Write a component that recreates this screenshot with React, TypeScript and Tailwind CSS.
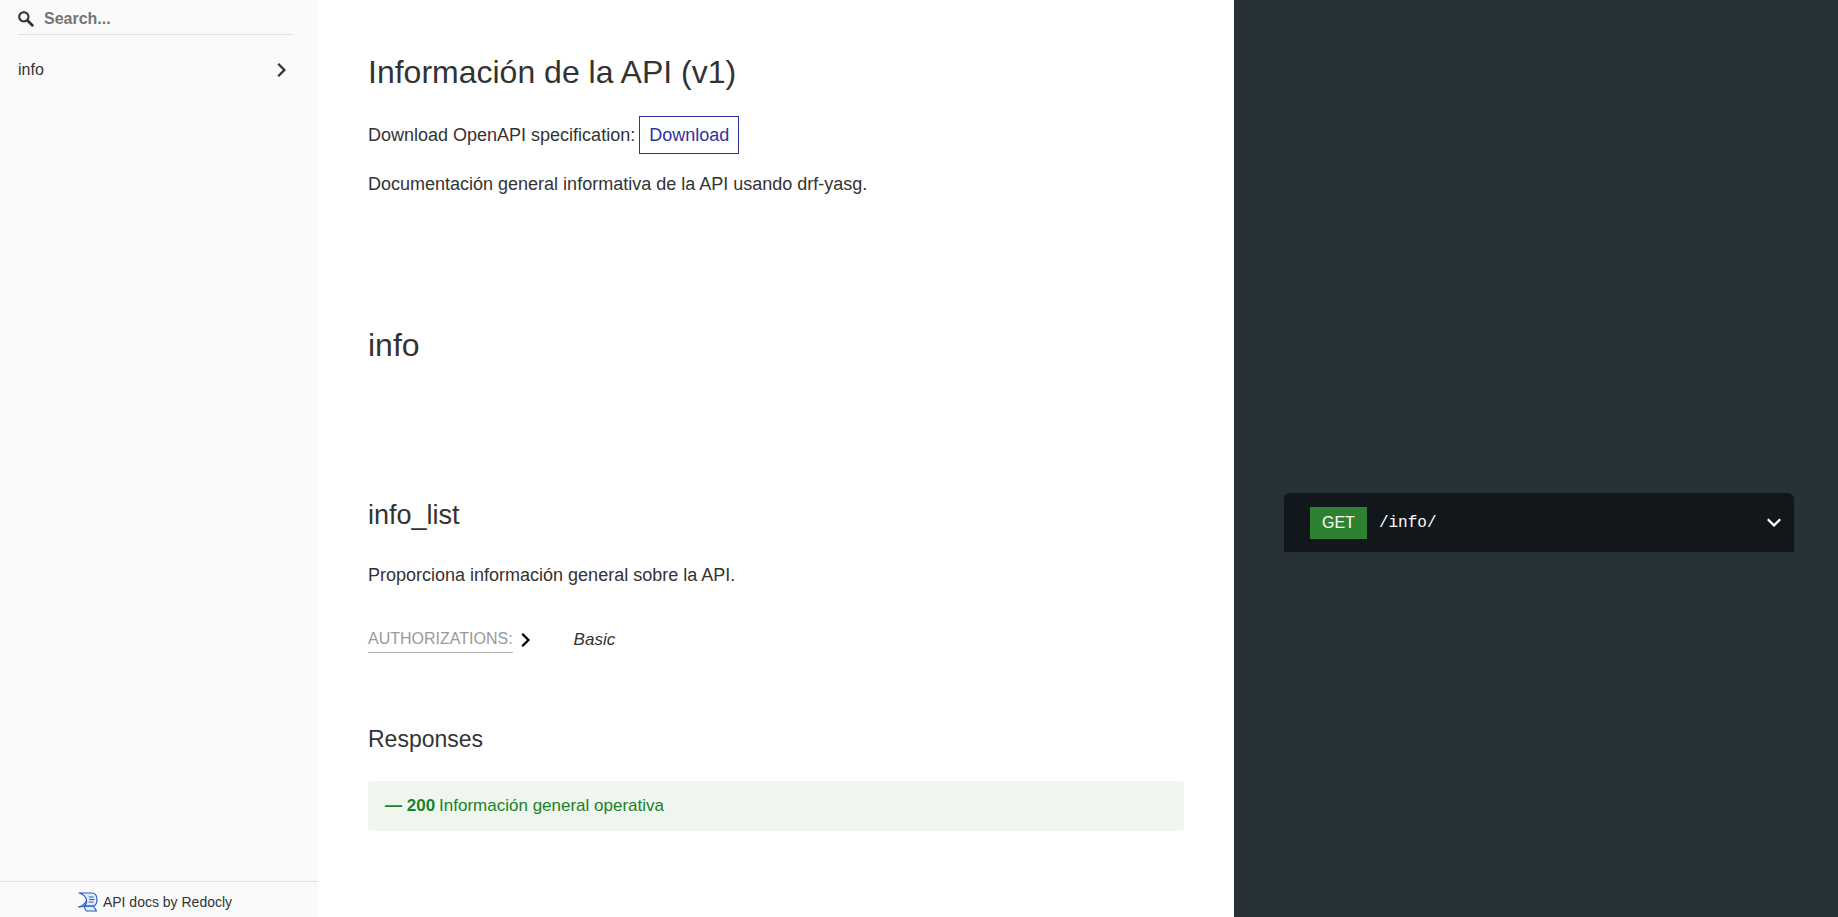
import type { ReactNode } from "react";

type ChevronProps = { className: string };

function Chevron({ className }: ChevronProps) {
  return (
    <svg
      viewBox="0 0 16 16"
      className={className}
      fill="none"
      stroke="currentColor"
      strokeWidth="2.3"
      aria-hidden="true"
    >
      <path d="M4.200 1.800 10.400 8 4.200 14.200" />
    </svg>
  );
}

function SearchIcon() {
  return (
    <svg viewBox="0 0 1000 1000" className="size-4 shrink-0" fill="currentColor" aria-hidden="true">
      <path d="M968.2 849.4 667.3 549c83.9-136.5 66.7-317.4-51.7-435.6C477.1-25 252.5-25 113.9 113.4c-138.5 138.3-138.5 362.6 0 501C219.2 730.1 413.2 743 547.6 666.5l301.9 301.4c43.6 43.6 76.9 14.9 104.2-12.4 27.3-27.3 58.1-62.5 14.5-106.1zM524.5 522c-88.9 88.7-233 88.7-321.8 0-88.9-88.7-88.9-232.6 0-321.3 88.9-88.7 233-88.7 321.8 0 88.9 88.7 88.9 232.6 0 321.3z" />
    </svg>
  );
}

function RedoclyLogo() {
  return (
    <svg
      viewBox="0 0 20 20"
      className="size-5 shrink-0"
      fill="#e3ecfc"
      stroke="#2a5cc4"
      strokeWidth="1.2"
      strokeLinejoin="round"
      strokeLinecap="round"
      aria-hidden="true"
    >
      <path d="M1 1h12.500c3.500 0 5.500 2.800 5.500 6.500s-2 6.200-4 6.700H6.500C8.500 12 9 9.500 8.200 7 7.200 3.800 4.500 2 1 1z" />
      <path d="M1 14.800c3-.8 5.800-2.600 7-5.300" fill="none" />
      <path d="M1 14.800c2.500 0 3.500 0 5.500-.6H15c1 0 2 2.600 3.500 4.800H8.500c-1.500-1-2-2.500-2-4.800" />
      <path d="M11.200 5h4M11.500 7.500h4.500M11.200 10h4" />
    </svg>
  );
}

type RowProps = { children: ReactNode; sample?: ReactNode; last?: boolean };

function Row({ children, sample, last }: RowProps) {
  return (
    <section className={last ? "grid grow grid-cols-[916fr_604fr]" : "grid grid-cols-[916fr_604fr]"}>
      <div className="px-[50px] pb-16">{children}</div>
      <div className="bg-[#263238] pr-11 pl-[50px]">{sample}</div>
    </section>
  );
}

export default function App() {
  return (
    <div className="flex min-h-screen bg-white font-['Liberation_Sans',Arial,sans-serif] text-[#333]">
      <aside className="sticky top-0 flex h-screen w-[318px] shrink-0 flex-col bg-[#fafafa]">
        <label className="mr-[25px] ml-[18px] flex h-[35px] items-center gap-[10px] border-b border-[#e1e1e1] pt-[3px]">
          <SearchIcon />
          <input
            type="text"
            aria-label="Search"
            placeholder="Search..."
            className="w-full bg-transparent text-base font-bold outline-none placeholder:text-[#757575]"
          />
        </label>
        <nav className="mt-[19px] grow">
          <a href="#info" className="flex h-8 items-center justify-between pr-7 pl-[18px] text-base">
            info
            <Chevron className="size-4" />
          </a>
        </nav>
        <a
          href="https://redocly.com/redoc/"
          className="flex h-9 items-center justify-center gap-[5px] border-t border-[#e1e1e1] pt-1 pr-2 text-sm"
        >
          <RedoclyLogo />
          API docs by Redocly
        </a>
      </aside>

      <main className="flex min-w-0 grow flex-col">
        <Row>
          <h1 className="mb-6 pt-[52px] text-[32px] leading-10">Información de la API (v1)</h1>
          <p className="flex items-center gap-1 text-lg">
            Download OpenAPI specification:
            <a
              href="#download"
              className="flex h-[38px] items-center border border-[#32329f] px-[9px] text-[#32329f]"
            >
              Download
            </a>
          </p>
          <p className="mt-4 text-lg">Documentación general informativa de la API usando drf-yasg.</p>
        </Row>

        <Row>
          <h2 id="info" className="pt-[63px] text-[32px] leading-10">
            info
          </h2>
        </Row>

        <Row
          last
          sample={
            <div className="pt-16">
              <button
                type="button"
                className="flex h-[59px] w-full items-center rounded-t-md bg-[#11171a] pr-3 pl-[26px] text-white"
              >
                <span className="flex h-8 items-center bg-[#2f8132] px-3 text-base">GET</span>
                <span className="ml-3 grow text-left font-['Liberation_Mono',monospace] text-base">/info/</span>
                <Chevron className="size-4 rotate-90" />
              </button>
            </div>
          }
        >
          <h2 className="pt-[66px] text-[27px] leading-10">info_list</h2>
          <p className="mt-[26px] text-lg">Proporciona información general sobre la API.</p>
          <div className="mt-[37px] flex items-center">
            <button type="button" className="flex items-center gap-[5px]">
              <span className="border-b border-[#b0b0b0] text-base leading-[26px] text-[#999]">AUTHORIZATIONS:</span>
              <Chevron className="size-4 text-black" />
            </button>
            <em className="ml-10 text-[17px]">Basic</em>
          </div>
          <h3 className="mt-[70px] text-[23px] leading-8">Responses</h3>
          <div className="mt-[26px] flex h-[50px] items-center rounded-sm bg-[#eef6ef] px-[17px] text-[17px] text-[#1d8127]">
            <strong>— 200</strong>
            <span className="ml-1">Información general operativa</span>
          </div>
        </Row>
      </main>
    </div>
  );
}
